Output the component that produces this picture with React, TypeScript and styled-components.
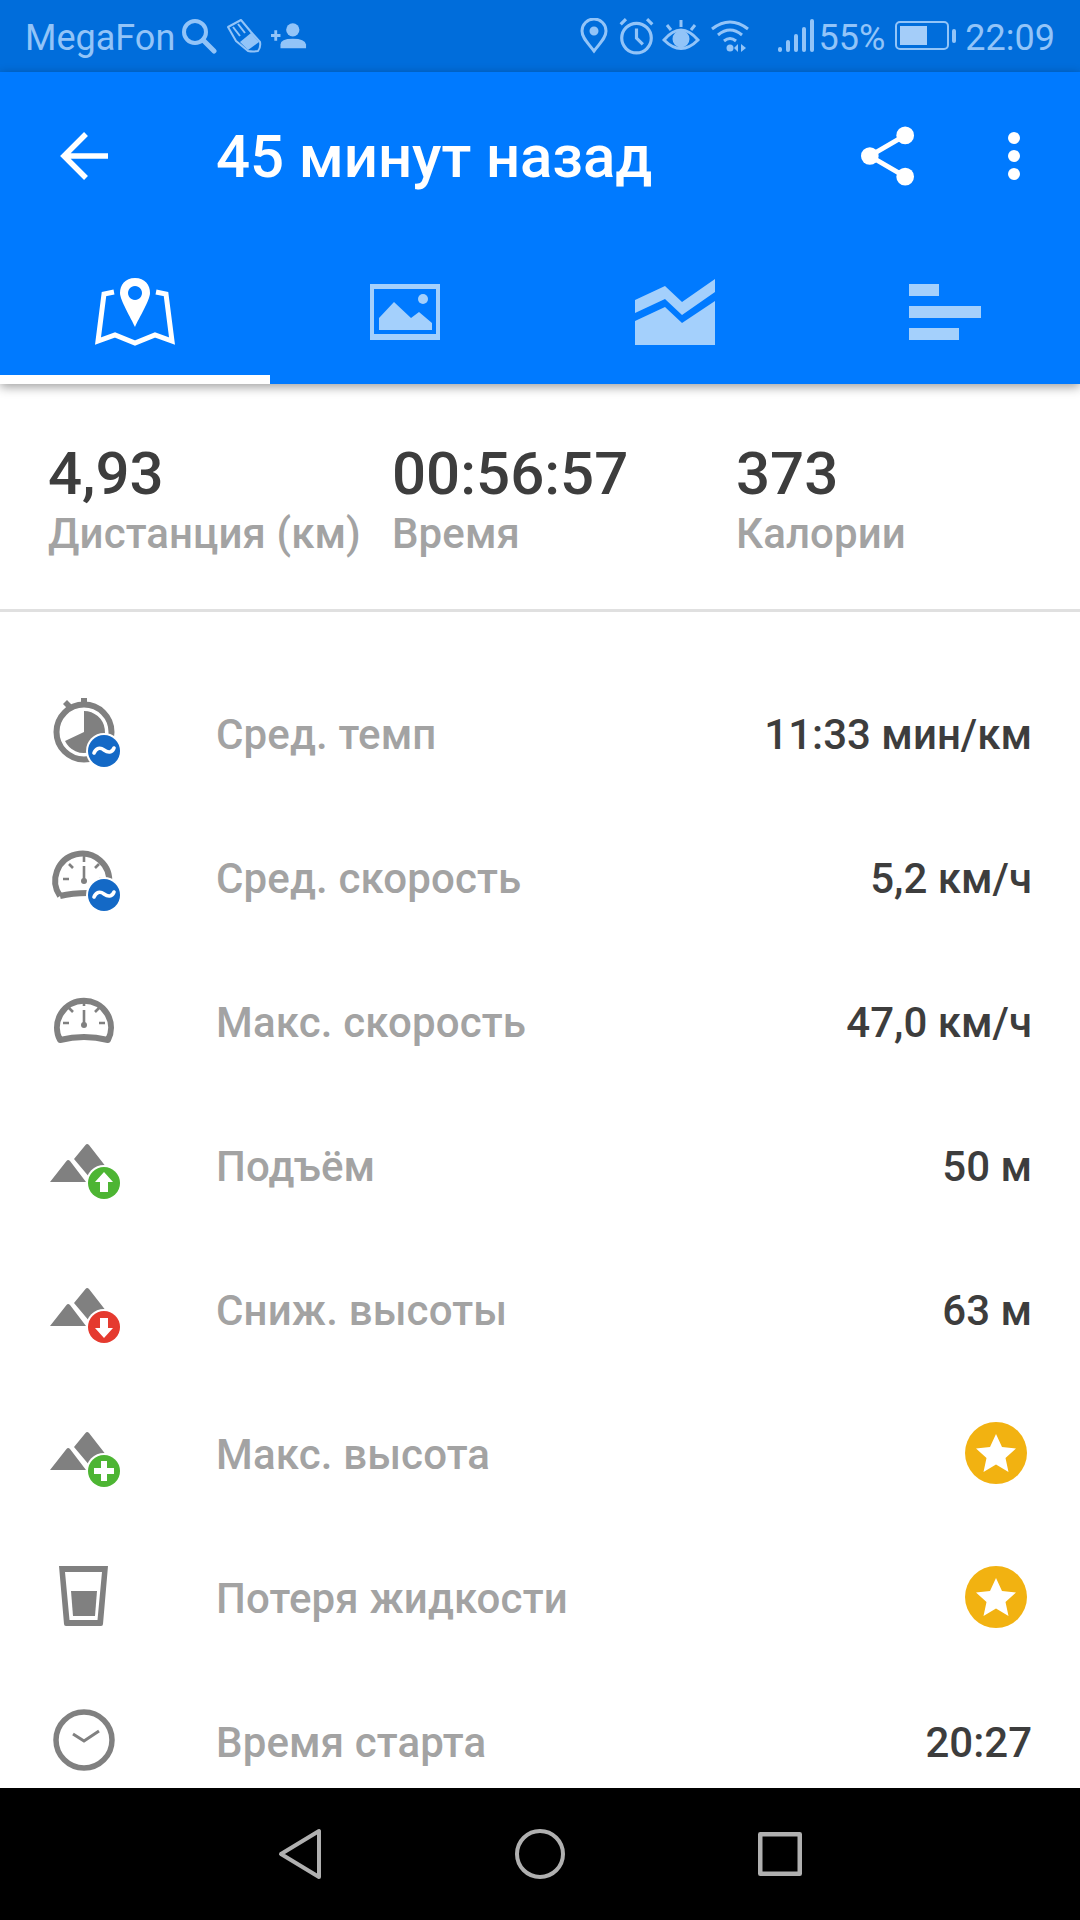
import React from "react";
import styled, { createGlobalStyle } from "styled-components";

const Global = createGlobalStyle`
  html, body { margin: 0; padding: 0; background: #fff; }
  body { font-family: Roboto, "Noto Sans", sans-serif; }
  svg { display: block; }
`;

const Screen = styled.div`
  width: 1080px; height: 1920px; display: flex; flex-direction: column; overflow: hidden; background: #fff;
`;
const StatusBar = styled.div`
  height: 72px; flex: none; background: #006ddb; color: #92c4f8; display: flex; align-items: center;
  justify-content: space-between; padding: 0 25px; font-size: 36px; box-sizing: border-box;
`;
const StatusGroup = styled.div`display: flex; align-items: center;`;
const StatusText = styled.span<{ $ml?: number }>`margin: 4px 0 0 ${p => p.$ml ?? 0}px; line-height: 68px; white-space: nowrap;`;
const StatusIcon = styled.svg<{ $ml?: number }>`margin-left: ${p => p.$ml ?? 0}px; flex: none;`;

const AppBar = styled.header`
  flex: none; background: #007aff; box-shadow: 0 3px 10px rgba(0,0,0,.38); position: relative; z-index: 1;
`;
const Toolbar = styled.div`height: 168px; display: flex; align-items: center; padding-left: 60px;`;
const Title = styled.h1`
  margin: 0 0 0 108px; flex: 1; color: #fff; font-size: 60px; font-weight: 500; letter-spacing: -0.1px; white-space: nowrap;
`;
const ToolIcon = styled.svg<{ $mr?: number }>`margin-right: ${p => p.$mr ?? 0}px; flex: none;`;
const Tabs = styled.div`height: 144px; display: grid; grid-template-columns: repeat(4, 270px);`;
const Tab = styled.div<{ $active?: boolean }>`
  display: flex; align-items: center; justify-content: center; box-sizing: border-box;
  box-shadow: ${p => (p.$active ? "inset 0 -9px 0 #fff" : "none")};
`;

const Stats = styled.section`
  flex: none; height: 228px; box-sizing: border-box; border-bottom: 3px solid #e0e0e0; padding: 55px 0 0 48px;
  display: grid; grid-template-columns: 344px 344px 1fr;
`;
const Stat = styled.div`display: flex; flex-direction: column;`;
const StatValue = styled.div`font-size: 60px; line-height: 70px; font-weight: 500; color: #3d3d3d; white-space: nowrap;`;
const StatLabel = styled.div`font-size: 42px; line-height: 50px; font-weight: 500; color: #a3a3a3; letter-spacing: 0.1px; white-space: nowrap;`;

const List = styled.div`flex: 1; min-height: 0; padding-top: 50px; overflow: hidden;`;
const Row = styled.div`height: 144px; display: flex; align-items: center; padding: 0 48px 0 44px;`;
const RowIcon = styled.svg`flex: none; width: 80px; height: 80px; overflow: visible;`;
const RowLabel = styled.div`margin-left: 92px; flex: 1; font-size: 42px; font-weight: 500; color: #a3a3a3; letter-spacing: 0.15px; white-space: nowrap;`;
const RowValue = styled.div`font-size: 42px; font-weight: 500; color: #3d3d3d; white-space: nowrap;`;
const ProBadge = styled.svg`width: 62px; height: 62px; margin: -2px 5px 0 0; flex: none;`;

const NavBar = styled.nav`
  flex: none; height: 132px; background: #000; display: grid; grid-template-columns: repeat(3, 240px);
  justify-content: center; align-items: center;
`;
const NavCell = styled.div`display: flex; justify-content: center;`;

const G = "#808080";
const S = "#92c4f8";

const Tilde = () => (
  <>
    <circle cx="60" cy="57" r="18" fill="#fff" />
    <circle cx="60" cy="57" r="16" fill="#1469c6" />
    <path d="M50 59c2-5 6-6 10-3s8 3 10-2" fill="none" stroke="#fff" strokeWidth="3.6" strokeLinecap="round" />
  </>
);

const Mountains = () => (
  <>
    <path d="M6 56 L22.5 35 Q24 33 26 35 L42 56Z" fill={G} />
    <path d="M30 33 L41.5 19 Q43 17 45 19 L66 46 L46 52Z" fill={G} />
  </>
);

const Dial = ({ closed }: { closed?: boolean }) => (
  <>
    <path d={closed ? "M16 58 A27 27 0 1 1 64 58 Q40 52 16 58Z" : "M16 58 A27 27 0 1 1 65 46 M16 58 Q28 55 44 55"} fill="none" stroke={G} strokeWidth="6" strokeLinejoin="round" />
    <path d="M40 18v6M19 41h6M55 41h6M25 26l4 4M55 26l-4 4M40 28v13" stroke={G} strokeWidth="2.6" fill="none" />
    <circle cx="40" cy="43" r="3" fill={G} />
  </>
);

const Icons: Record<string, React.ReactNode> = {
  pace: (
    <>
      <circle cx="40" cy="38" r="27.5" fill="none" stroke={G} strokeWidth="6" />
      <path d="M37 4h6v8h-6z M19 10l4-4 5 5-4 4z" fill={G} />
      <path d="M40 38V17 A21 21 0 1 1 21 47Z" fill={G} />
      <Tilde />
    </>
  ),
  avg: (<><Dial /><Tilde /></>),
  max: <Dial closed />,
  up: (
    <>
      <Mountains />
      <circle cx="60" cy="57" r="18" fill="#fff" />
      <circle cx="60" cy="57" r="16" fill="#4db533" />
      <path d="M60 46l9 10h-5v10h-8V56h-5z" fill="#fff" />
    </>
  ),
  down: (
    <>
      <Mountains />
      <circle cx="60" cy="57" r="18" fill="#fff" />
      <circle cx="60" cy="57" r="16" fill="#e53a2f" />
      <path d="M60 68l-9-10h5V48h8v10h5z" fill="#fff" />
    </>
  ),
  high: (
    <>
      <Mountains />
      <circle cx="60" cy="57" r="18" fill="#fff" />
      <circle cx="60" cy="57" r="16" fill="#4db533" />
      <path d="M57 47h6v7h7v6h-7v7h-6v-7h-7v-6h7z" fill="#fff" />
    </>
  ),
  glass: (
    <>
      <path fillRule="evenodd" d="M15 8H64L59 66Q59 68 57 68H22Q20 68 20 66Z M21 14L25.500 62H53.500L58 14Z" fill={G} />
      <path d="M27 33H53L51 58H29Z" fill={G} />
    </>
  ),
  clock: (
    <>
      <circle cx="40" cy="38" r="28" fill="none" stroke={G} strokeWidth="5.500" />
      <path d="M29 32l11 7 15-10" fill="none" stroke={G} strokeWidth="3" />
    </>
  ),
};

const rows: { icon: string; label: string; value?: string }[] = [
  { icon: "pace", label: "Сред. темп", value: "11:33 мин/км" },
  { icon: "avg", label: "Сред. скорость", value: "5,2 км/ч" },
  { icon: "max", label: "Макс. скорость", value: "47,0 км/ч" },
  { icon: "up", label: "Подъём", value: "50 м" },
  { icon: "down", label: "Сниж. высоты", value: "63 м" },
  { icon: "high", label: "Макс. высота" },
  { icon: "glass", label: "Потеря жидкости" },
  { icon: "clock", label: "Время старта", value: "20:27" },
];

const T = "#a4d0fc";

export default function App() {
  return (
    <Screen>
      <Global />
      <StatusBar>
        <StatusGroup>
          <StatusText>MegaFon</StatusText>
          <StatusIcon $ml={6} width="36" height="36" viewBox="0 0 36 36" fill="none" stroke={S}>
            <circle cx="14" cy="14" r="11" strokeWidth="4" />
            <path d="M22 22l11 11" strokeWidth="5" strokeLinecap="round" />
          </StatusIcon>
          <StatusIcon $ml={10} width="35" height="34" viewBox="0 0 35 34" fill="none" stroke={S} strokeWidth="2">
            <path d="M1 8L14 1l10 12 9 10q1 5-2 9-5 1-10 0L9 22Z" strokeLinejoin="round" />
            <path d="M13 23L24 14l8 9-11 8z" fill={S} stroke="none" />
            <path d="M6 8l7 9M11 5l7 9" />
          </StatusIcon>
          <StatusIcon $ml={9} width="36" height="28" viewBox="0 0 38 28" fill={S}>
            <path d="M0 12h10v3H0zM3.500 8h3v11h-3z" />
            <circle cx="23" cy="7.500" r="7" />
            <path d="M10 27v-4q0-6 13-6t14 6v4z" />
          </StatusIcon>
        </StatusGroup>
        <StatusGroup>
          <StatusIcon width="28" height="36" viewBox="0 0 28 36" fill="none" stroke={S} strokeWidth="3">
            <path d="M14 33C8 25 2 20 2 13a12 12 0 0 1 24 0c0 7-6 12-12 20z" />
            <circle cx="14" cy="13" r="3" fill={S} />
          </StatusIcon>
          <StatusIcon $ml={9} width="39" height="38" viewBox="0 0 36 36" fill="none" stroke={S} strokeWidth="3">
            <circle cx="18" cy="20" r="14" />
            <path d="M18 11v9l6 6M3 7l5-5M33 7l-5-5" />
          </StatusIcon>
          <StatusIcon $ml={6} width="38" height="34" viewBox="0 0 36 34" fill="none" stroke={S} strokeWidth="3">
            <path d="M1 21Q18 1 35 21 18 38 1 21Z" />
            <circle cx="18" cy="20" r="7" fill={S} />
            <path d="M18 8V1M8 11L4 6M28 11l4-5" />
          </StatusIcon>
          <StatusIcon $ml={9} width="44" height="36" viewBox="0 0 40 36" fill="none" stroke={S} strokeWidth="3">
            <path d="M1 11Q19-3 37 11M7 17Q19 7 31 17M13 23Q19 18 25 23" />
            <circle cx="19" cy="30" r="3.500" fill={S} stroke="none" />
            <path d="M30 26v8l5-4zM27 34v-8l-4 4z" fill={S} stroke="none" />
          </StatusIcon>
          <StatusIcon $ml={25} width="36" height="34" viewBox="0 0 36 34" fill={S}>
            <rect x="0" y="28" width="4" height="5" rx="2" />
            <rect x="8" y="21" width="4" height="12" rx="2" />
            <rect x="16" y="15" width="4" height="18" rx="2" />
            <rect x="24" y="8" width="4" height="25" rx="2" />
            <rect x="32" y="0" width="4" height="33" rx="2" />
          </StatusIcon>
          <StatusText $ml={5}>55%</StatusText>
          <StatusIcon $ml={10} width="62" height="30" viewBox="0 0 62 30" fill="none">
            <rect x="1" y="1" width="52" height="27" rx="4" stroke={S} strokeWidth="2" />
            <rect x="5" y="5" width="27" height="19" fill="#a4cdf9" />
            <rect x="57" y="8" width="4" height="14" rx="2" fill={S} />
          </StatusIcon>
          <StatusText $ml={8}>22:09</StatusText>
        </StatusGroup>
      </StatusBar>

      <AppBar>
        <Toolbar>
          <ToolIcon width="48" height="48" viewBox="0 0 48 48" fill="none" stroke="#fff" strokeWidth="5.500">
            <path d="M48 24H4M26 2L4 24l22 22" />
          </ToolIcon>
          <Title>45 минут назад</Title>
          <ToolIcon $mr={93} width="55" height="62" viewBox="0 0 56 62" fill="#fff">
            <circle cx="46" cy="10" r="9" />
            <circle cx="10" cy="31" r="9" />
            <circle cx="46" cy="52" r="9" />
            <path d="M46 10L10 31l36 21" fill="none" stroke="#fff" strokeWidth="5" />
          </ToolIcon>
          <ToolIcon $mr={60} width="12" height="48" viewBox="0 0 12 48" fill="#fff">
            <circle cx="6" cy="6" r="6" />
            <circle cx="6" cy="24" r="6" />
            <circle cx="6" cy="42" r="6" />
          </ToolIcon>
        </Toolbar>
        <Tabs>
          <Tab $active>
            <svg width="80" height="68" viewBox="0 0 80 68" fill="none">
              <path d="M19 14L9 16 3 63 20 57 40 65 60 57 77 63 71 16 61 14" stroke="#fff" strokeWidth="5" />
              <path fillRule="evenodd" d="M40 0C30 0 25 7 25 15 25 22 36 40 40 49 44 40 55 22 55 15 55 7 50 0 40 0Z M40 8a7 7 0 1 0 .01 0Z" fill="#fff" />
            </svg>
          </Tab>
          <Tab>
            <svg width="70" height="56" viewBox="0 0 70 56" fill={T}>
              <path fillRule="evenodd" d="M0 0H70V56H0Z M4 5V50H66V5Z" />
              <path d="M9 34L24 18 41 34 49 28 62 39V46H9Z" />
              <ellipse cx="53" cy="15" rx="5" ry="5" />
            </svg>
          </Tab>
          <Tab>
            <svg width="80" height="66" viewBox="0 0 80 66" fill={T}>
              <path d="M0 21L30 7 47 23 80 0V13L47 36 30 20 0 34Z" />
              <path d="M0 42L30 28 47 44 80 22V66H0Z" />
            </svg>
          </Tab>
          <Tab>
            <svg width="72" height="56" viewBox="0 0 72 56" fill={T}>
              <rect width="30" height="12" />
              <rect y="22" width="72" height="12" />
              <rect y="44" width="50" height="12" />
            </svg>
          </Tab>
        </Tabs>
      </AppBar>

      <Stats>
        <Stat><StatValue>4,93</StatValue><StatLabel>Дистанция (км)</StatLabel></Stat>
        <Stat><StatValue>00:56:57</StatValue><StatLabel>Время</StatLabel></Stat>
        <Stat><StatValue>373</StatValue><StatLabel>Калории</StatLabel></Stat>
      </Stats>

      <List>
        {rows.map(r => (
          <Row key={r.label}>
            <RowIcon viewBox="0 0 80 80">{Icons[r.icon]}</RowIcon>
            <RowLabel>{r.label}</RowLabel>
            {r.value ? (
              <RowValue>{r.value}</RowValue>
            ) : (
              <ProBadge viewBox="0 0 62 62">
                <circle cx="31" cy="31" r="31" fill="#f2b211" />
                <path d="M31 12l6 13 14 1.500-10.500 9.500 3 14L31 42.500 18.500 50l3-14L11 26.500 25 25z" fill="#fff" />
              </ProBadge>
            )}
          </Row>
        ))}
      </List>

      <NavBar>
        <NavCell>
          <svg width="44" height="52" viewBox="0 0 44 52" fill="none" stroke="#b0b0b0" strokeWidth="4" strokeLinejoin="round">
            <path d="M41 3V49L3 26Z" />
          </svg>
        </NavCell>
        <NavCell>
          <svg width="50" height="50" viewBox="0 0 50 50" fill="none" stroke="#b0b0b0" strokeWidth="4">
            <circle cx="25" cy="25" r="23" />
          </svg>
        </NavCell>
        <NavCell>
          <svg width="44" height="44" viewBox="0 0 44 44" fill="none" stroke="#b0b0b0" strokeWidth="4.500" strokeLinejoin="round">
            <rect x="2.250" y="2.250" width="39.500" height="39.500" />
          </svg>
        </NavCell>
      </NavBar>
    </Screen>
  );
}
